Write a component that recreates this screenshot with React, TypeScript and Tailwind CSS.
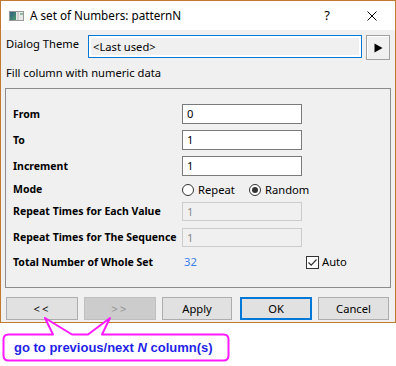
import React from "react";

function Radio({ checked, label, w }: { checked?: boolean; label: string; w?: string }) {
  return (
    <div className={`flex items-center ${w ?? ""}`}>
      <div className="w-[12px] h-[12px] rounded-full border border-[#333333] bg-white flex items-center justify-center shrink-0">
        {checked && <div className="w-[6px] h-[6px] rounded-full bg-[#333333]" />}
      </div>
      <span className="ml-[4px]">{label}</span>
    </div>
  );
}

function Row({ label, children, className }: { label: string; children: React.ReactNode; className?: string }) {
  return (
    <div className={`grid grid-cols-[169px_1fr] items-center pl-[7px] ${className ?? ""}`}>
      <span className="font-bold text-[10.5px] whitespace-nowrap">{label}</span>
      <div className="flex items-center">{children}</div>
    </div>
  );
}

function Input({ value, disabled }: { value: string; disabled?: boolean }) {
  return (
    <div
      className={`w-[120px] flex items-center pl-[4px] border ${
        disabled ? "h-[19px] border-[#cccccc] bg-[#f0f0f0] text-[#8a8a8a]" : "h-[20px] border-[#7a7a7a] bg-white text-black"
      }`}
    >
      {value}
    </div>
  );
}

function Btn({ children, w, variant }: { children: React.ReactNode; w: string; variant?: "disabled" | "default" }) {
  const base = "h-[23px] flex items-center justify-center shrink-0";
  if (variant === "disabled")
    return <div className={`${base} ${w} bg-[#cccccc] border border-[#bfbfbf] text-[#8f8f8f]`}>{children}</div>;
  if (variant === "default")
    return <div className={`${base} ${w} bg-[#e1e1e1] border-2 border-[#0078d7]`}>{children}</div>;
  return <div className={`${base} ${w} bg-[#e1e1e1] border border-[#adadad]`}>{children}</div>;
}

export default function App() {
  return (
    <div className="relative w-[396px] h-[366px] bg-white overflow-hidden font-['Noto_Sans',sans-serif] text-[11.2px] leading-none text-black">
      <div className="w-[396px] h-[323px] border border-[#c27a30] bg-[#f0f0f0] flex flex-col">
        {/* Title bar */}
        <div className="h-[29px] bg-white flex items-center shrink-0">
          <svg className="ml-[8px] shrink-0" width="15" height="10" viewBox="0 0 15 10">
            <rect x="0.5" y="0.5" width="14" height="9" fill="#e8e8e8" stroke="#9a9a9a" />
            <defs>
              <linearGradient id="g1" x1="0" y1="0" x2="1" y2="1">
                <stop offset="0" stopColor="#2f5f86" />
                <stop offset="1" stopColor="#4a9a6a" />
              </linearGradient>
            </defs>
            <rect x="1" y="1" width="6" height="8" fill="url(#g1)" />
            <rect x="8" y="1" width="2" height="8" fill="#cfcfcf" />
            <rect x="11" y="2" width="3" height="2" fill="#8fb8a0" />
          </svg>
          <span className="ml-[6px] whitespace-nowrap text-[11.7px]">A set of Numbers: patternN</span>
          <span className="ml-auto text-[13px]">?</span>
          <svg className="ml-[37px] mr-[18px]" width="10" height="10" viewBox="0 0 10 10">
            <path d="M0.5 0.5 L9.5 9.5 M9.5 0.5 L0.5 9.5" stroke="#000" strokeWidth="1" />
          </svg>
        </div>

        {/* Dialog Theme row */}
        <div className="flex items-start mt-[5px] pl-[5px]">
          <span className="w-[82px] h-[17px] flex items-center whitespace-nowrap">Dialog Theme</span>
          <div className="w-[274px] h-[23px] border border-[#0078d7] bg-white p-[2px]">
            <div className="h-full bg-[#f0f0f0] flex items-center pl-[2px]">&lt;Last used&gt;</div>
          </div>
          <div className="ml-[4px] w-[24px] h-[25px] border border-[#a0a0a0] bg-[#f0f0f0] flex items-center justify-center shadow-[inset_1px_1px_0_#ffffff]">
            <svg width="9" height="10" viewBox="0 0 9 10">
              <path d="M0.5 0.5 L8.5 5 L0.5 9.5 Z" fill="#000" />
            </svg>
          </div>
        </div>

        <div className="mt-[4px] pl-[5px] h-[17px] flex items-center">Fill column with numeric data</div>

        {/* Group box */}
        <div className="mt-[7px] mx-[4px] w-[386px] h-[200px] border border-[#8c8c8c] pt-[15px] flex flex-col shrink-0">
          <Row label="From">
            <Input value="0" />
          </Row>
          <Row label="To" className="mt-[6px]">
            <Input value="1" />
          </Row>
          <Row label="Increment" className="mt-[6px]">
            <Input value="1" />
          </Row>
          <Row label="Mode" className="mt-[4px] h-[19px]">
            <Radio label="Repeat" w="w-[67px]" />
            <Radio label="Random" checked />
          </Row>
          <Row label="Repeat Times for Each Value" className="mt-[3px]">
            <Input value="1" disabled />
          </Row>
          <Row label="Repeat Times for The Sequence" className="mt-[7px]">
            <Input value="1" disabled />
          </Row>
          <Row label="Total Number of Whole Set" className="mt-[7px] h-[16px]">
            <span className="w-[124px] pl-[2px] text-[#3a7ff0]">32</span>
            <div className="w-[13px] h-[13px] border border-[#333333] bg-white flex items-center justify-center">
              <svg width="11" height="11" viewBox="0 0 11 11">
                <path d="M1.5 5.5 L4.2 8.2 L9.5 2.5" stroke="#333333" strokeWidth="1.2" fill="none" />
              </svg>
            </div>
            <span className="ml-[3px]">Auto</span>
          </Row>
        </div>

        {/* Buttons */}
        <div className="mt-[9px] pl-[5px] flex">
          <Btn w="w-[72px]">
            <span className="tracking-[2px]">&lt;&lt;</span>
          </Btn>
          <div className="ml-[6px]">
            <Btn w="w-[72px]" variant="disabled">
              <span className="tracking-[2px]">&gt;&gt;</span>
            </Btn>
          </div>
          <div className="ml-[6px]">
            <Btn w="w-[70px]">Apply</Btn>
          </div>
          <div className="ml-[8px]">
            <Btn w="w-[72px]" variant="default">OK</Btn>
          </div>
          <div className="ml-[6px]">
            <Btn w="w-[71px]">Cancel</Btn>
          </div>
        </div>
      </div>

      {/* Callout */}
      <svg className="absolute left-0 top-[315px]" width="232" height="50" viewBox="0 0 232 50">
        <path
          d="M8.5 19.5 L53 19.5 L45 3 L72 19.5 L88 19.5 L110 3 L102 19.5 L223.5 19.5 Q228.5 19.5 228.5 24.5 L228.5 40.5 Q228.5 45.5 223.5 45.5 L8.5 45.5 Q3.5 45.5 3.5 40.5 L3.5 24.5 Q3.5 19.5 8.5 19.5 Z"
          fill="#ffffff"
          stroke="#ff1aff"
          strokeWidth="2"
          strokeLinejoin="round"
        />
      </svg>
      <div className="relative mt-[11px] pl-[14px] h-[27px] flex items-center font-['Liberation_Sans',Arial,sans-serif] font-bold text-[13px] text-[#1f1fe8]">
        go to previous/next&nbsp;<i>N</i>&nbsp;column(s)
      </div>
    </div>
  );
}
